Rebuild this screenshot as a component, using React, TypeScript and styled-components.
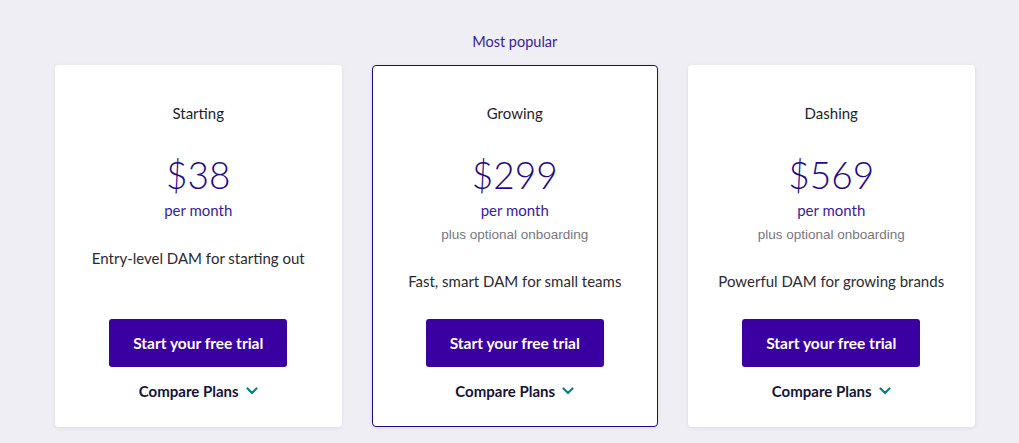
import React from 'react';
import styled, { createGlobalStyle } from 'styled-components';

const GlobalStyle = createGlobalStyle`
  html, body {
    margin: 0;
    padding: 0;
    background: #efeef5;
  }
  body {
    font-family: Lato, 'Noto Sans', sans-serif;
  }
`;

const Page = styled.div`
  min-height: 443px;
  box-sizing: border-box;
  padding: 30px 44px 0 55px;
`;

const Grid = styled.div`
  display: grid;
  grid-template-columns: repeat(3, 286.5px);
  column-gap: 30px;
`;

const Column = styled.div`
  display: flex;
  flex-direction: column;
`;

const Tag = styled.div`
  height: 24px;
  line-height: 24px;
  margin-bottom: 11px;
  text-align: center;
  font-size: 14.5px;
  color: #3a1c9c;
`;

const Card = styled.div<{ featured?: boolean }>`
  flex: 1;
  display: flex;
  flex-direction: column;
  align-items: center;
  box-sizing: border-box;
  background: #ffffff;
  border-radius: 4px;
  border: 1px solid ${p => (p.featured ? '#1d0f6e' : 'transparent')};
  box-shadow: 0 1px 4px rgba(30, 20, 80, 0.08);
  padding: 35px 16px 23px;
  text-align: center;
`;

const PlanName = styled.h3`
  margin: 0;
  font-size: 15px;
  line-height: 24px;
  font-weight: 400;
  color: #1e1e2a;
`;

const Price = styled.div`
  margin-top: 27px;
  font-size: 37px;
  line-height: 46px;
  font-weight: 300;
  color: #1f0a8a;
`;

const Period = styled.div`
  font-size: 15px;
  line-height: 24px;
  font-weight: 400;
  color: #3a1c9c;
`;

const Note = styled.div`
  margin-top: 3px;
  font-family: 'Liberation Sans', Arial, sans-serif;
  font-size: 13.5px;
  line-height: 20px;
  color: #77777f;
`;

const Description = styled.p`
  margin: 24px 0 0;
  font-size: 15px;
  line-height: 24px;
  font-weight: 400;
  color: #2a2a33;
`;

const Actions = styled.div`
  margin-top: auto;
  padding-top: 26px;
  display: flex;
  flex-direction: column;
  align-items: center;
`;

const TrialButton = styled.button`
  width: 178px;
  height: 48px;
  border: none;
  border-radius: 3px;
  background: #3a00a2;
  color: #ffffff;
  font-family: inherit;
  font-size: 15.5px;
  font-weight: 700;
  cursor: pointer;
`;

const Compare = styled.button`
  margin-top: 12px;
  display: flex;
  align-items: center;
  gap: 7px;
  height: 24px;
  padding: 0;
  border: none;
  background: none;
  font-family: inherit;
  font-size: 15px;
  font-weight: 700;
  color: #15133a;
  cursor: pointer;
`;

const Chevron = () => (
  <svg width="12" height="8" viewBox="0 0 12 8" fill="none">
    <path d="M1.5 1.5 L6 6 L10.5 1.5" stroke="#0a7f80" strokeWidth="2.2" strokeLinecap="round" strokeLinejoin="round" />
  </svg>
);

const plans = [
  { name: 'Starting', price: '$38', note: '', text: 'Entry-level DAM for starting out' },
  { name: 'Growing', price: '$299', note: 'plus optional onboarding', text: 'Fast, smart DAM for small teams', popular: true },
  { name: 'Dashing', price: '$569', note: 'plus optional onboarding', text: 'Powerful DAM for growing brands' },
];

const App: React.FC = () => (
  <>
    <GlobalStyle />
    <Page>
      <Grid>
        {plans.map(plan => (
          <Column key={plan.name}>
            <Tag>{plan.popular ? 'Most popular' : ''}</Tag>
            <Card featured={plan.popular}>
              <PlanName>{plan.name}</PlanName>
              <Price>{plan.price}</Price>
              <Period>per month</Period>
              {plan.note && <Note>{plan.note}</Note>}
              <Description>{plan.text}</Description>
              <Actions>
                <TrialButton>Start your free trial</TrialButton>
                <Compare>
                  Compare Plans <Chevron />
                </Compare>
              </Actions>
            </Card>
          </Column>
        ))}
      </Grid>
    </Page>
  </>
);

export default App;
